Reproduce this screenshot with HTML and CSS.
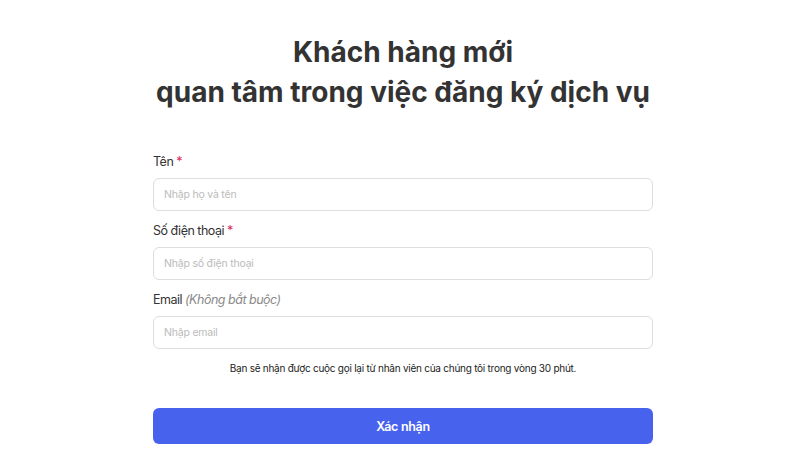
FILE: index.html
```html
<!DOCTYPE html>
<html lang="vi">
<head>
    <meta charset="UTF-8">
    <meta name="viewport" content="width=device-width, initial-scale=1.0">
    <title>Đăng ký dịch vụ</title>
    <link rel="stylesheet" href="styles.css">
</head>
<body>
    <div class="page">
        <h1 class="title">Khách hàng mới<br>quan tâm trong việc đăng ký dịch vụ</h1>

        <form class="signup">
            <div class="field">
                <label for="name">Tên<span class="req">*</span></label>
                <input type="text" id="name" placeholder="Nhập họ và tên">
            </div>
            <div class="field">
                <label for="phone">Số điện thoại<span class="req">*</span></label>
                <input type="text" id="phone" placeholder="Nhập số điện thoại">
            </div>
            <div class="field">
                <label for="email">Email <em class="optional">(Không bắt buộc)</em></label>
                <input type="text" id="email" placeholder="Nhập email">
            </div>

            <p class="note">Bạn sẽ nhận được cuộc gọi lại từ nhân viên của chúng tôi trong vòng 30 phút.</p>

            <button type="button" class="submit">Xác nhận</button>
        </form>
    </div>
</body>
</html>
```

FILE: styles.css
```css
body {
    margin: 0;
    background-color: #fff;
    font-family: Inter, "Noto Sans", sans-serif;
    color: #333;
}
.page {
    width: 500px;
    margin: 0 auto;
    padding: 32px 0 0 6px;
}
.title {
    margin: 0 0 42px;
    text-align: center;
    font-size: 28px;
    font-weight: 700;
    line-height: 40px;
    color: #333;
}
.field {
    display: flex;
    flex-direction: column;
    margin-bottom: 12px;
}
label {
    font-size: 12.5px;
    line-height: 16px;
    letter-spacing: -0.5px;
    margin-bottom: 8px;
    color: #333;
}
.req {
    margin-left: 3px;
    color: #e0245e;
}
.optional {
    color: #8a8a8a;
}
input {
    height: 33px;
    box-sizing: border-box;
    padding: 0 10px;
    border: 1px solid #ddd;
    border-radius: 6px;
    font-family: inherit;
    font-size: 10.5px;
    letter-spacing: -0.2px;
    outline: none;
}
input::placeholder {
    color: #bbb;
}
.note {
    margin: 0 0 33px;
    text-align: center;
    font-size: 10px;
    line-height: 14px;
    letter-spacing: -0.25px;
    color: #222;
}
.submit {
    width: 100%;
    height: 36px;
    border: none;
    border-radius: 6px;
    background-color: #4763ee;
    color: #fff;
    font-family: inherit;
    font-size: 12.5px;
    font-weight: 600;
    letter-spacing: -0.3px;
    cursor: pointer;
}
```
